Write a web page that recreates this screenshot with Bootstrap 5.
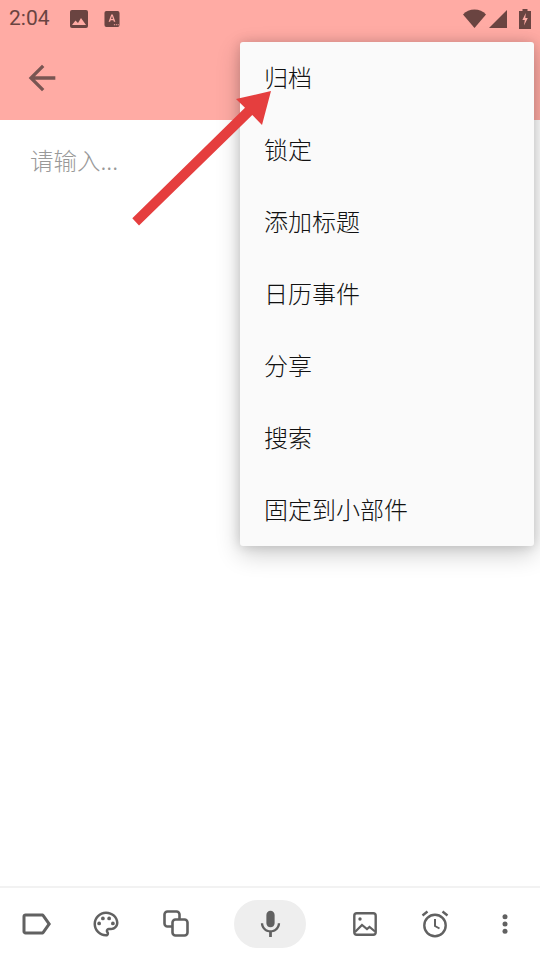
<!DOCTYPE html>
<html lang="zh">
<head>
<meta charset="utf-8">
<title>Note</title>
<link href="https://cdn.jsdelivr.net/npm/bootstrap@5.3.0/dist/css/bootstrap.min.css" rel="stylesheet">
<style>
html,body{margin:0;background:#fff}
.screen{width:540px;height:960px;overflow:hidden;font-family:"Noto Sans CJK SC","Noto Sans",sans-serif}
.top-area{background:#ffaba4;height:120px;flex:none}
.status-row{height:40px;padding:0 9px 3px;color:#6a4441}
.clock{font-family:Roboto,sans-serif;font-size:21px;width:61px}
.note-icon{margin-right:16px}
.wifi-icon{margin-right:3px}
.signal-icon{margin-right:12px}
.tool-row{height:80px;padding:0 0 4px 22px}
.note-body{padding:24px 30px}
.hint{font-size:23.500px;line-height:32px;color:#999;font-weight:300}
.bottom-bar{height:74px;border-top:2px solid #f2f2f2;flex:none;padding-left:1px}
.slot{width:70px;height:72px;flex:none}
.mic-slot{width:119px;height:72px;flex:none;padding-left:23px}
.mic-pill{width:72px;height:48px;border-radius:24px;background:#eeeeee}
.overflow-menu{position:absolute;left:240px;top:42px;width:294px;background:#fafafa;border-radius:3px;box-shadow:0 8px 24px rgba(0,0,0,.2),0 0 12px rgba(0,0,0,.15)}
.overflow-menu .list-group-item{height:72px;padding:0 0 0 24px;background:transparent;border:0;font-size:24px;line-height:70px;color:#111;font-weight:300}
.pointer-arrow{position:absolute;left:0;top:0;pointer-events:none}
</style>
</head>
<body>
<div class="screen position-relative d-flex flex-column">
  <div class="top-area">
    <div class="status-row d-flex align-items-center">
      <span class="clock">2:04</span>
      <svg class="note-icon" width="18" height="18" viewBox="0 0 18 18"><rect width="18" height="18" rx="2" fill="#6a4441"/><path d="M2 15l3.500-4.500 2.500 2.500 3-5 5 7z" fill="#ffaba4"/></svg>
      <svg width="16" height="16" viewBox="0 0 16 17"><rect width="16" height="17" rx="2" fill="#6a4441"/><path d="M4.400 11.500L7.200 3.600h1.600l2.800 7.900H10l-.6-1.800H6.600L6 11.500zM7 8.400h2L8 5.400z" fill="#ffaba4"/><path d="M10 14h1.200v1.200H10zM12 14h1.200v1.200H12zM14 14h1.200v1.200H14z" fill="#ffaba4"/></svg>
      <svg class="ms-auto wifi-icon" width="23" height="19" viewBox="0 0 23 19"><path d="M0 5.500C3 2.300 7 .5 11.500 .5S20 2.300 23 5.500L11.500 19z" fill="#6a4441"/></svg>
      <svg class="signal-icon" width="18" height="18" viewBox="0 0 18 18"><path d="M0 18L18 0v18z" fill="#6a4441"/></svg>
      <svg width="12" height="20" viewBox="0 0 12 20"><path d="M3.500 2V0h5v2H12v18H0V2z" fill="#6a4441"/><path d="M6.800 4L3.400 11h2.400L5 16.500 8.800 9H6.300z" fill="#ffaba4"/></svg>
    </div>
    <div class="tool-row d-flex align-items-center">
      <svg width="40" height="40" viewBox="0 0 24 24"><path d="M20 11H7.830l5.590-5.590L12 4l-8 8 8 8 1.410-1.410L7.830 13H20z" fill="#785552"/></svg>
    </div>
  </div>
  <div class="note-body flex-grow-1"><div class="hint">请输入...</div></div>
  <div class="bottom-bar d-flex align-items-center">
    <div class="slot d-flex align-items-center justify-content-center">
      <svg width="36" height="36" viewBox="0 0 24 24"><path fill="#616161" d="M17.630 5.840C17.270 5.330 16.670 5 16 5L5 5.010C3.900 5.010 3 5.900 3 7v10c0 1.100.9 1.990 2 1.990L16 19c.67 0 1.270-.33 1.630-.84L22 12l-4.370-6.160zM16 17H5V7h11l3.550 5L16 17z"/></svg>
    </div>
    <div class="slot d-flex align-items-center justify-content-center">
      <svg width="30" height="30" viewBox="0 0 24 24"><path fill="#616161" d="M12 22C6.490 22 2 17.510 2 12S6.490 2 12 2s10 4.040 10 9c0 3.310-2.690 6-6 6h-1.770c-.28 0-.5.22-.5.5 0 .12.05.23.13.33.41.47.64 1.060.64 1.670 0 1.380-1.120 2.500-2.500 2.500zm0-18c-4.410 0-8 3.590-8 8s3.590 8 8 8c.28 0 .5-.22.5-.5 0-.16-.08-.28-.14-.35-.41-.46-.63-1.050-.63-1.650 0-1.380 1.120-2.500 2.500-2.500H16c2.210 0 4-1.790 4-4 0-3.860-3.590-7-8-7z"/><circle fill="#616161" cx="6.500" cy="11.500" r="1.500"/><circle fill="#616161" cx="9.500" cy="7.500" r="1.500"/><circle fill="#616161" cx="14.500" cy="7.500" r="1.500"/><circle fill="#616161" cx="17.500" cy="11.500" r="1.500"/></svg>
    </div>
    <div class="slot d-flex align-items-center justify-content-center">
      <svg width="28" height="28" viewBox="0 0 28 28"><rect x="2.500" y="1.500" width="15" height="15" rx="3" fill="none" stroke="#616161" stroke-width="2.600"/><rect x="10.500" y="9.500" width="15" height="16" rx="3" fill="#fff" stroke="#616161" stroke-width="2.600"/></svg>
    </div>
    <div class="mic-slot d-flex align-items-center">
      <div class="mic-pill d-flex align-items-center justify-content-center">
        <svg width="33" height="33" viewBox="0 0 24 24"><path fill="#616161" d="M12 14c1.660 0 2.990-1.340 2.990-3L15 5c0-1.660-1.340-3-3-3S9 3.340 9 5v6c0 1.660 1.340 3 3 3zm5.300-3c0 3-2.540 5.100-5.300 5.100S6.700 14 6.700 11H5c0 3.410 2.720 6.230 6 6.720V21h2v-3.280c3.280-.48 6-3.300 6-6.720h-1.700z"/></svg>
      </div>
    </div>
    <div class="slot d-flex align-items-center justify-content-center">
      <svg width="24" height="24" viewBox="0 0 24 24"><rect x="1.300" y="1.300" width="21.400" height="21.400" rx="2.500" fill="none" stroke="#616161" stroke-width="2.400"/><path d="M2 20l7-7 5 4 2.500-2 5.500 4.500" fill="none" stroke="#616161" stroke-width="2.200"/><circle cx="7" cy="7" r="1.700" fill="#616161"/></svg>
    </div>
    <div class="slot d-flex align-items-center justify-content-center">
      <svg width="28" height="28" viewBox="0 0 28 28"><circle cx="14" cy="15.500" r="10.700" fill="none" stroke="#616161" stroke-width="2.400"/><path d="M14 9v7l4.500 2.500" fill="none" stroke="#616161" stroke-width="2"/><path d="M1.500 5.500L6.500 1.500M26.500 5.500L21.500 1.500" stroke="#616161" stroke-width="2.400"/></svg>
    </div>
    <div class="slot d-flex align-items-center justify-content-center">
      <svg width="6" height="22" viewBox="0 0 6 22"><circle cx="3" cy="3.700" r="2.500" fill="#616161"/><circle cx="3" cy="11" r="2.500" fill="#616161"/><circle cx="3" cy="18.300" r="2.500" fill="#616161"/></svg>
    </div>
  </div>

  <div class="overflow-menu list-group">
    <div class="list-group-item">归档</div>
    <div class="list-group-item">锁定</div>
    <div class="list-group-item">添加标题</div>
    <div class="list-group-item">日历事件</div>
    <div class="list-group-item">分享</div>
    <div class="list-group-item">搜索</div>
    <div class="list-group-item">固定到小部件</div>
  </div>

  <svg class="pointer-arrow" width="540" height="240" viewBox="0 0 540 240">
    <path d="M132.300 218.300L245 107.700 236 99 271 91 262 125 252.300 115 139 225.500z" fill="#e53e3e"/>
  </svg>
</div>
<script src="https://cdn.jsdelivr.net/npm/bootstrap@5.3.0/dist/js/bootstrap.bundle.min.js"></script>
</body>
</html>
